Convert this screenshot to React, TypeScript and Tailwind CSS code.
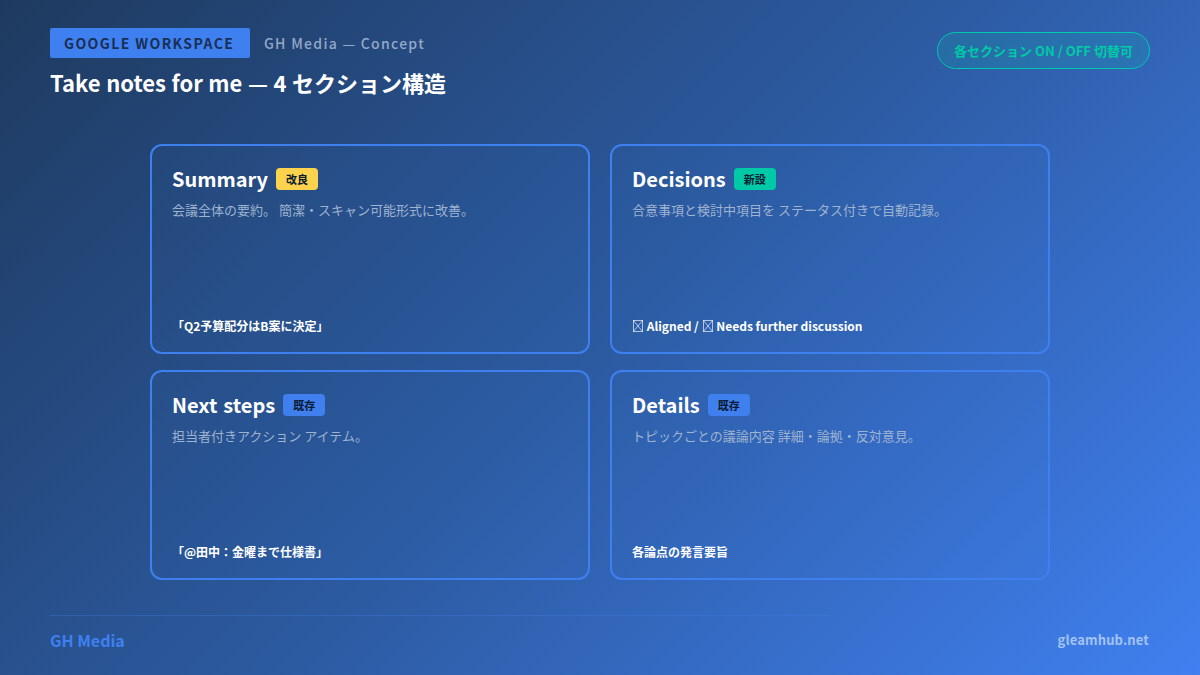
const cards = [
  { title: "Summary", tag: "改良", tagClass: "bg-[#fcd34d]", desc: "会議全体の要約。 簡潔・スキャン可能形式に改善。", note: "「Q2予算配分はB案に決定」" },
  { title: "Decisions", tag: "新設", tagClass: "bg-[#00c9a7]", desc: "合意事項と検討中項目を ステータス付きで自動記録。", note: <><MissingGlyph /> Aligned / <MissingGlyph /> Needs further discussion</> },
  { title: "Next steps", tag: "既存", tagClass: "bg-[#3f80ee]", desc: "担当者付きアクション アイテム。", note: "「@田中：金曜まで仕様書」" },
  { title: "Details", tag: "既存", tagClass: "bg-[#3f80ee]", desc: "トピックごとの議論内容 詳細・論拠・反対意見。", note: "各論点の発言要旨" },
];

// the box-with-a-cross the reference shows for a glyph its font lacks
function MissingGlyph() {
  return (
    <svg viewBox="0 0 12 14" className="inline-block h-[14px] w-[12px] align-[-2px]" fill="none" stroke="white" strokeOpacity="0.8" strokeWidth="0.8">
      <rect x="1.4" y="1.4" width="9.2" height="11.2" />
      <path d="M1.4 1.4 10.6 12.6M10.6 1.4 1.4 12.6" />
    </svg>
  );
}

export default function App() {
  return (
    <div className="flex h-[675px] w-[1200px] flex-col overflow-hidden bg-[linear-gradient(135deg,#1e3a5f_0%,#2c5aa0_50%,#4080f0_100%)] font-['Noto_Sans_CJK_JP',sans-serif] text-white">
      <header className="flex items-start justify-between px-[50px] pt-[28px]">
        <div>
          <div className="flex items-center gap-[14px]">
            <span className="flex h-[30px] w-[200px] items-center rounded-[2px] bg-[#3f80f0] pl-[14px] text-[14px] font-bold tracking-[1.4px] text-[#1a2f55]">
              GOOGLE WORKSPACE
            </span>
            <span className="text-[14px] font-medium tracking-[1.28px] text-[#94a8c8]">GH Media — Concept</span>
          </div>
          <h1 className="mt-[6px] text-[22px] leading-[36px] font-bold [word-spacing:0.6px]">Take notes for me — 4 セクション構造</h1>
        </div>
        <div className="mt-[4px] flex h-[37px] w-[213px] items-center justify-center rounded-full border border-[#00c9b0] bg-[#00c9a7]/15 text-[13px] font-bold text-[#00c9a7]">
          各セクション ON / OFF 切替可
        </div>
      </header>

      <main className="mx-auto mt-[44px] grid w-[900px] grid-cols-2 grid-rows-[210px_210px] gap-x-[20px] gap-y-[16px]">
        {cards.map((card) => (
          <section key={card.title} className="flex flex-col rounded-[12px] border-2 border-[#3f80f0] bg-[#3f80f0]/5 px-[20px] pt-[17px] pb-[17px]">
            <div className="flex items-center gap-[8px]">
              <h2 className="text-[20px] leading-[32px] font-bold [word-spacing:1.5px]">{card.title}</h2>
              <span className={`flex h-[22px] w-[42px] items-center justify-center rounded-[4px] text-[11px] font-bold text-[#0a1a33] ${card.tagClass}`}>
                {card.tag}
              </span>
            </div>
            <p className="mt-[5px] text-[13px] leading-[20px] text-[#9fb3d1]">{card.desc}</p>
            <p className="mt-auto text-[12px] leading-[18px] font-bold text-white">{card.note}</p>
          </section>
        ))}
      </main>

      <footer className="mt-auto px-[50px] pb-[23px]">
        <div className="h-px w-[780px] bg-[#3f80f0]/30" />
        <div className="mt-[12px] flex items-center justify-between">
          <span className="text-[16px] font-bold text-[#3f80f0]">GH Media</span>
          <span className="pr-[1px] text-[13px] font-bold tracking-[0.15px] text-[#a3c4f3]">gleamhub.net</span>
        </div>
      </footer>
    </div>
  );
}
